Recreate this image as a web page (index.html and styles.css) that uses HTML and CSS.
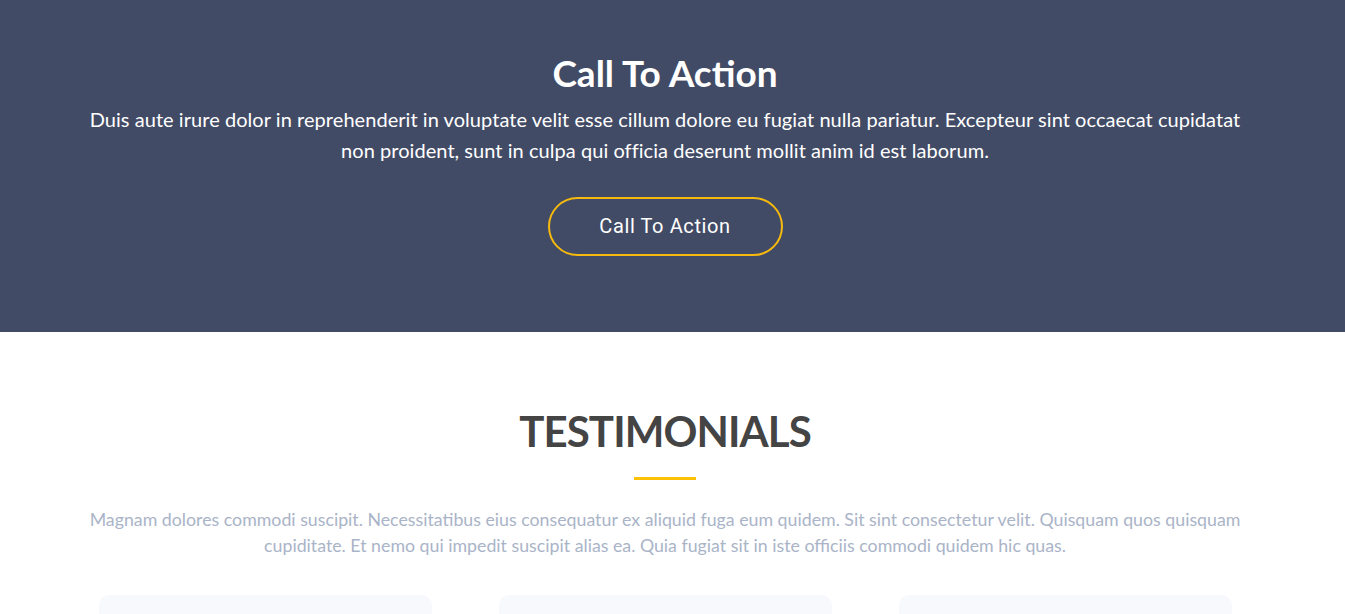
FILE: index.html
```html
<!DOCTYPE html>
<html lang="en">
<head>
<meta charset="utf-8">
<title>Call To Action</title>
<link rel="stylesheet" href="styles.css">
</head>
<body>
<section class="cta">
  <div class="cta-inner">
    <h2 class="cta-title">Call To Action</h2>
    <p class="cta-text">Duis aute irure dolor in reprehenderit in voluptate velit esse cillum dolore eu fugiat nulla pariatur. Excepteur sint occaecat cupidatat non proident, sunt in culpa qui officia deserunt mollit anim id est laborum.</p>
    <a class="cta-btn" href="#">Call To Action</a>
  </div>
</section>
<section class="testimonials">
  <div class="t-inner">
    <h2 class="t-title">TESTIMONIALS</h2>
    <div class="t-bar"></div>
    <p class="t-text">Magnam dolores commodi suscipit. Necessitatibus eius consequatur ex aliquid fuga eum quidem. Sit sint consectetur velit. Quisquam quos quisquam cupiditate. Et nemo qui impedit suscipit alias ea. Quia fugiat sit in iste officiis commodi quidem hic quas.</p>
    <div class="t-cards">
      <div class="t-card"></div>
      <div class="t-card"></div>
      <div class="t-card"></div>
    </div>
  </div>
</section>
</body>
</html>
```
FILE: styles.css
```css
* { box-sizing: border-box; }
html, body { margin: 0; padding: 0; }
body {
  font-family: "Lato", "Open Sans", sans-serif;
  background: #ffffff;
  overflow: hidden;
}
.cta {
  background: #424b65;
  height: 332px;
  padding: 50px 15px 0 0;
}
.cta-inner {
  width: 1170px;
  margin: 0 auto;
  text-align: center;
}
.cta-title {
  margin: 0;
  color: #ffffff;
  font-family: "Lato", sans-serif;
  font-weight: 700;
  font-size: 37px;
  line-height: 46px;
}
.cta-text {
  margin: 8px auto 0;
  max-width: 1168px;
  color: #ffffff;
  font-size: 20px;
  letter-spacing: 0.05px;
  line-height: 31px;
}
.cta-btn {
  display: inline-block;
  margin-top: 31px;
  width: 235px;
  height: 59px;
  line-height: 55px;
  border: 2px solid #f6b90d;
  border-radius: 30px;
  color: #ffffff;
  font-family: "Roboto", sans-serif;
  font-size: 20px;
  letter-spacing: 0.6px;
  text-decoration: none;
}
.testimonials {
  padding: 0 15px 0 0;
}
.t-inner {
  width: 1200px;
  margin: 0 auto;
  text-align: center;
  padding-top: 71px;
}
.t-title {
  margin: 0;
  color: #444444;
  font-family: "Lato", sans-serif;
  font-weight: 700;
  font-size: 42px;
  letter-spacing: -0.9px;
  line-height: 56px;
}
.t-bar {
  width: 62px;
  height: 3px;
  background: #ffc107;
  margin: 18px auto 0;
}
.t-text {
  margin: 26px auto 0;
  max-width: 1180px;
  color: #aab4c8;
  font-size: 17.75px;
  line-height: 26px;
}
.t-cards {
  display: grid;
  grid-template-columns: repeat(3, 333px);
  justify-content: center;
  column-gap: 67px;
  margin-top: 37px;
}
.t-card {
  height: 200px;
  background: #f8f9fc;
  border-radius: 10px;
}
```
